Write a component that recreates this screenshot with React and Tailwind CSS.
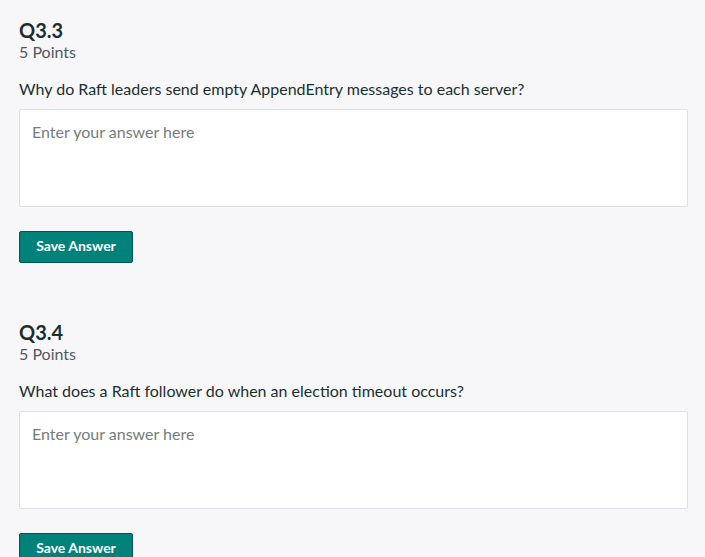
import React from "react";

function Question({ id, text, last }) {
  return (
    <div className={last ? "" : "mb-[58px]"}>
      <h2 className="text-[20px] leading-[22px] font-bold text-[#1b302e]">{id}</h2>
      <div className="mt-[1px] text-[16px] leading-[20px] text-[#4f5b5a]">5 Points</div>
      <p className="mt-[17px] text-[16px] leading-[20px] text-[#1b302e]">{text}</p>
      <textarea
        className="mt-[10px] block w-[669px] h-[98px] bg-white border border-[#dfe0e4] rounded-[2px] px-[12px] pt-[12px] pb-[12px] text-[16px] leading-[20px] text-[#1b302e] placeholder:text-[#737d7c] resize-none outline-none"
        placeholder="Enter your answer here"
      />
      <button className="mt-[24px] flex items-center justify-center pb-[3px] w-[114px] h-[32px] bg-[#00817a] border border-[#03544f] rounded-[2px] text-white text-[14px] leading-[16px] font-bold">
        Save Answer
      </button>
    </div>
  );
}

export default function App() {
  return (
    <div
      className="w-[705px] h-[557px] overflow-hidden bg-[#f7f7f9] pl-[19px] pt-[19px]"
      style={{ fontFamily: "Lato, 'Open Sans', sans-serif" }}
    >
      <Question id="Q3.3" text="Why do Raft leaders send empty AppendEntry messages to each server?" />
      <Question id="Q3.4" text="What does a Raft follower do when an election timeout occurs?" last />
    </div>
  );
}
